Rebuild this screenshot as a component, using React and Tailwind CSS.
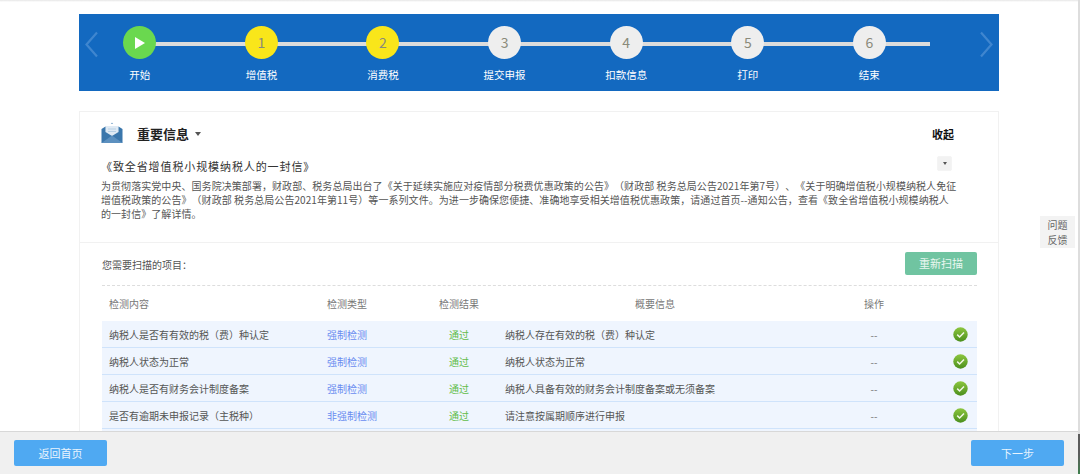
const steps = [
  { label: "开始", start: true },
  { label: "增值税", num: 1, active: true },
  { label: "消费税", num: 2, active: true },
  { label: "提交申报", num: 3 },
  { label: "扣款信息", num: 4 },
  { label: "打印", num: 5 },
  { label: "结束", num: 6 },
];

const rows = [
  {
    name: "纳税人是否有有效的税（费）种认定",
    type: "强制检测",
    info: "纳税人存在有效的税（费）种认定",
  },
  {
    name: "纳税人状态为正常",
    type: "强制检测",
    info: "纳税人状态为正常",
  },
  {
    name: "纳税人是否有财务会计制度备案",
    type: "强制检测",
    info: "纳税人具备有效的财务会计制度备案或无须备案",
  },
  {
    name: "是否有逾期未申报记录（主税种）",
    type: "非强制检测",
    info: "请注意按属期顺序进行申报",
  },
];

const tableCols = "grid grid-cols-[225px_112px_66px_300px_138px_34px] items-center";

function MailIcon() {
  return (
    <svg width="22" height="22" viewBox="0 0 22 22" className="shrink-0">
      <path d="M11 0.5 L12.2 2 L9.8 2 Z" fill="#7fa8cc" />
      <path d="M4.5 4 L17.5 4 L17.5 12 L11 15 L4.5 12 Z" fill="#dfeaf4" />
      <path d="M7 7 H15 M7 9.5 H15" stroke="#b9d0e4" strokeWidth="1" />
      <path d="M0.5 7 L4.5 4.5 L4.5 10 L11 14 L17.5 10 L17.5 4.5 L21.5 7 L21.5 21 L0.5 21 Z" fill="#3b77ac" />
      <path d="M0.5 21 L11 13.5 L21.5 21 Z" fill="#5c90bf" />
    </svg>
  );
}

function CheckBadge() {
  return (
    <svg width="15" height="15" viewBox="0 0 15 15">
      <defs>
        <linearGradient id="okGrad" x1="0" y1="0" x2="0" y2="1">
          <stop offset="0" stopColor="#8cc63f" />
          <stop offset="1" stopColor="#4b8f1d" />
        </linearGradient>
      </defs>
      <circle cx="7.5" cy="7.5" r="7.2" fill="url(#okGrad)" />
      <path d="M4.2 7.6 L6.6 10 L11 5.4" fill="none" stroke="#f2f8e6" strokeWidth="1.5" />
    </svg>
  );
}

function Arrow({ flip }) {
  return (
    <svg width="15" height="27" viewBox="0 0 15 27" className={`mt-[17px] ${flip ? "ml-[-1px] rotate-180" : ""}`}>
      <path d="M13 1.5 L2.5 13.5 L13 25.5" fill="none" stroke="#3f86cf" strokeWidth="2.2" />
    </svg>
  );
}

function Steps() {
  return (
    <div className="relative ml-[79px] mt-[14px] flex h-[77px] w-[920px] shrink-0 justify-between bg-[#1369c0] px-[5px]">
      <Arrow />
      <Arrow flip />
      <div className="absolute left-[61px] top-[28px] h-[4px] w-[790px] bg-[#dcdcdc]" />
      <div className="absolute left-0 top-0 flex pt-[12px]">
        {steps.map((s, i) => (
          <div key={i} className="flex w-[121.6px] flex-col items-center">
            {s.start ? (
              <div className="flex h-[33px] w-[33px] items-center justify-center rounded-full bg-[#6ad84f]">
                <div className="ml-[1px] h-0 w-0 border-y-[6px] border-l-[10px] border-y-transparent border-l-white" />
              </div>
            ) : (
              <div
                className={`flex h-[33px] w-[33px] items-center justify-center rounded-full text-[14px] text-[#8a8a7a] ${
                  s.active ? "bg-[#f9e61a]" : "bg-[#eeeeee]"
                }`}
              >
                {s.num}
              </div>
            )}
            <div className="mt-[8px] text-[10.5px] leading-[16px] text-white">{s.label}</div>
          </div>
        ))}
      </div>
    </div>
  );
}

function NoticeSection() {
  return (
    <div className="h-[131px] border-b border-[#f1f1f1] px-[21px] pt-[10px]">
      <div className="flex h-[22px] items-center">
        <MailIcon />
        <span className="ml-[14px] mt-[2px] text-[13px] font-bold text-[#222]">重要信息</span>
        <span className="ml-[6px] mt-[2px] h-0 w-0 border-x-[3.5px] border-t-[4px] border-x-transparent border-t-[#555]" />
        <span className="ml-auto mr-[23px] mt-[2px] text-[11px] font-bold text-[#111]">收起</span>
      </div>
      <div className="relative mt-[14px]">
        <div className="text-[11px] leading-[16px] tracking-[0.9px] text-[#333]">
          《致全省增值税小规模纳税人的一封信》
        </div>
        <div className="absolute right-[26px] top-[-1px] flex h-[13px] w-[13px] items-center justify-center bg-[#f2f2f2] shadow-[0_0_1px_#bbb]">
          <span className="h-0 w-0 border-x-[2.5px] border-t-[3px] border-x-transparent border-t-[#555]" />
        </div>
      </div>
      <p className="mt-[5px] whitespace-nowrap text-[10px] leading-[14px] tracking-[0.06px] text-[#555] [text-spacing-trim:space-all]">
        为贯彻落实党中央、国务院决策部署，财政部、税务总局出台了《关于延续实施应对疫情部分税费优惠政策的公告》（财政部 税务总局公告2021年第7号）、《关于明确增值税小规模纳税人免征
        <br />
        增值税政策的公告》（财政部 税务总局公告2021年第11号）等一系列文件。为进一步确保您便捷、准确地享受相关增值税优惠政策，请通过首页--通知公告，查看《致全省增值税小规模纳税人
        <br />
        的一封信》了解详情。
      </p>
    </div>
  );
}

function ScanTable() {
  return (
    <div className="pl-[22px] pr-[21px]">
      <div className="flex h-[43px] items-center justify-between border-b border-dashed border-[#dddddd] pt-[1px]">
        <span className="text-[10px] text-[#555]">您需要扫描的项目：</span>
        <button className="mb-[2px] h-[23px] w-[72px] rounded-[2px] bg-[#70c4a1] text-[11px] text-[#e9f7f0]">
          重新扫描
        </button>
      </div>
      <div className={`${tableCols} h-[35px] text-[10px] text-[#777]`}>
        <div className="pl-[7px]">检测内容</div>
        <div>检测类型</div>
        <div>检测结果</div>
        <div className="text-center">概要信息</div>
        <div className="text-center">操作</div>
        <div />
      </div>
      {rows.map((r, i) => (
        <div
          key={i}
          className={`${tableCols} h-[27px] border-b border-[#cfe3fb] bg-[#eff5fe] text-[10px] text-[#555]`}
        >
          <div className="pl-[7px]">{r.name}</div>
          <div className="text-[#6a8cf0]">{r.type}</div>
          <div className="pl-[10px] text-[#62bd4a]">通过</div>
          <div>{r.info}</div>
          <div className="text-center text-[#777]">--</div>
          <div className="flex justify-center">
            <CheckBadge />
          </div>
        </div>
      ))}
      <div className="h-[27px] bg-[#eff5fe]" />
    </div>
  );
}

function FeedbackTab() {
  return (
    <div className="absolute right-[5px] top-[216px] w-[35px] bg-[#f3f3f3] py-[1px] text-center text-[10px] leading-[15px] text-[#666]">
      问题
      <br />
      反馈
    </div>
  );
}

export default function App() {
  return (
    <div
      className="relative flex h-[474px] w-[1080px] flex-col overflow-hidden bg-white"
      style={{ fontFamily: '"Noto Sans CJK SC", "Liberation Sans", sans-serif' }}
    >
      <div className="h-[2px] shrink-0 bg-gradient-to-b from-[#e6e6e6] to-white" />
      <div className="flex min-h-0 flex-1 flex-col overflow-hidden">
        <div className="-mt-[2px] flex flex-col">
          <Steps />
          <div className="ml-[79px] mt-[20px] w-[920px] border border-b-0 border-[#f1f1f1]">
            <NoticeSection />
            <ScanTable />
          </div>
        </div>
      </div>
      <FeedbackTab />
      <div className="flex h-[43px] shrink-0 items-center justify-between border-t border-[#d8d8d8] bg-[#f0f0f0] pl-[14px] pr-[16px]">
        <button className="h-[26px] w-[93px] rounded-[2px] bg-[#4fa9f2] text-[11px] text-[#e8f4fe]">
          返回首页
        </button>
        <button className="h-[26px] w-[93px] rounded-[2px] bg-[#4fa9f2] text-[11px] text-[#e8f4fe]">
          下一步
        </button>
      </div>
      {/* window edge on the right */}
      <div className="absolute right-0 top-0 h-[434px] w-[2px] bg-[#dddddd]" />
      <div className="absolute bottom-0 right-0 h-[40px] w-[2px] bg-gradient-to-b from-[#5c5c5c] via-[#5c5c5c] to-[#3c7f4c]" />
    </div>
  );
}
